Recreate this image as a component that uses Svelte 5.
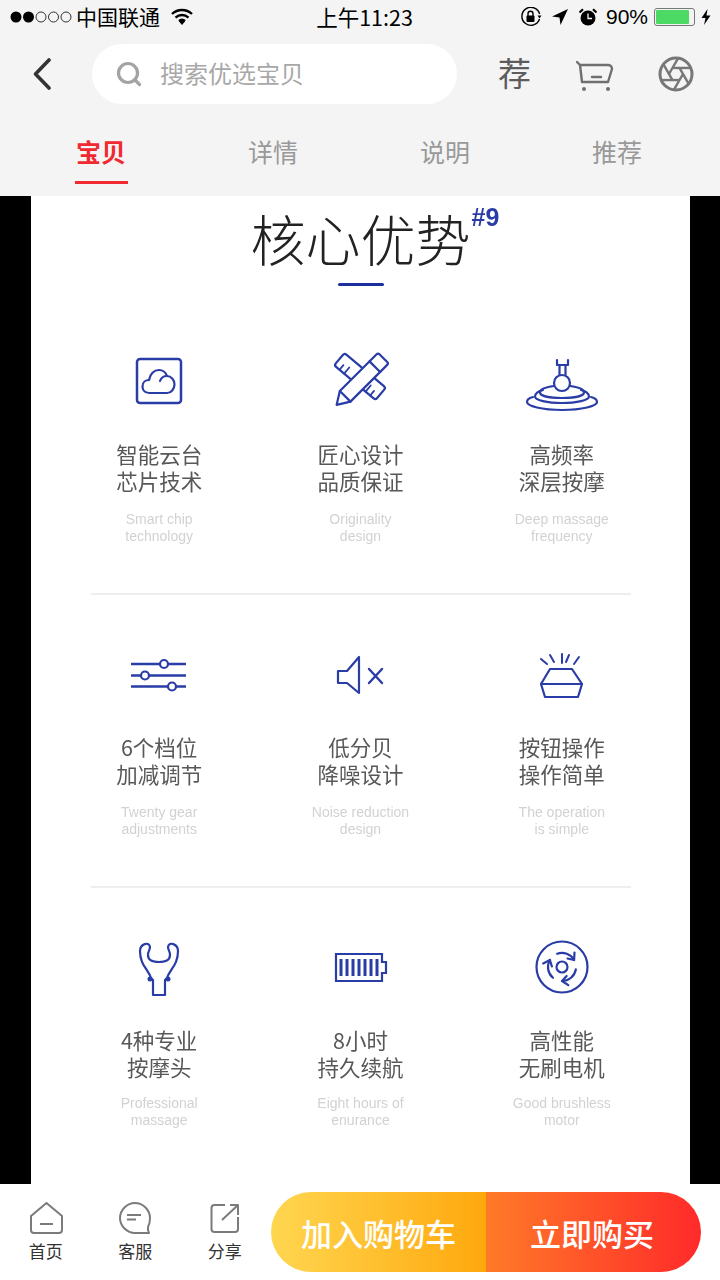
<script>
	const tabs = ['宝贝', '详情', '说明', '推荐'];

	const rows = [
		[
			{ icon: 'cloud', zh: ['智能云台', '芯片技术'], en: ['Smart chip', 'technology'] },
			{ icon: 'tools', zh: ['匠心设计', '品质保证'], en: ['Originality', 'design'] },
			{ icon: 'ripple', zh: ['高频率', '深层按摩'], en: ['Deep massage', 'frequency'] }
		],
		[
			{ icon: 'sliders', zh: ['6个档位', '加减调节'], en: ['Twenty gear', 'adjustments'] },
			{ icon: 'mute', zh: ['低分贝', '降噪设计'], en: ['Noise reduction', 'design'] },
			{ icon: 'button', zh: ['按钮操作', '操作简单'], en: ['The operation', 'is simple'] }
		],
		[
			{ icon: 'fork', zh: ['4种专业', '按摩头'], en: ['Professional', 'massage'] },
			{ icon: 'battery', zh: ['8小时', '持久续航'], en: ['Eight hours of', 'enurance'] },
			{ icon: 'motor', zh: ['高性能', '无刷电机'], en: ['Good brushless', 'motor'] }
		]
	];

	// aperture: inner hexagon edges run on until they hit the outer ring
	const inner = 7;
	const outer = 15.5;
	const blades = [0, 60, 120, 180, 240, 300].map((deg) => {
		const a = (deg * Math.PI) / 180;
		const b = ((deg + 60) * Math.PI) / 180;
		const x1 = inner * Math.cos(a);
		const y1 = inner * Math.sin(a);
		const x2 = inner * Math.cos(b);
		const y2 = inner * Math.sin(b);
		const dx = (x2 - x1) / inner;
		const dy = (y2 - y1) / inner;
		const p = x1 * dx + y1 * dy;
		const t = -p + Math.sqrt(p * p - inner * inner + outer * outer);
		return { x1: 18 + x1, y1: 18 + y1, x2: 18 + x1 + t * dx, y2: 18 + y1 + t * dy };
	});
</script>

<div class="page">
	<header class="top">
		<div class="status">
			<div class="status-left">
				<svg class="dots" width="62" height="14" viewBox="0 0 62 14">
					<circle cx="6" cy="7" r="5.5" fill="#000" />
					<circle cx="18.5" cy="7" r="5.5" fill="#000" />
					<circle cx="31" cy="7" r="5" fill="none" stroke="#333" />
					<circle cx="43.5" cy="7" r="5" fill="none" stroke="#333" />
					<circle cx="56" cy="7" r="5" fill="none" stroke="#333" />
				</svg>
				<span class="carrier">中国联通</span>
				<svg class="wifi" width="22" height="17" viewBox="0 0 22 17" fill="none" stroke="#000" stroke-width="2.4">
					<path d="M1 6a14.5 14.5 0 0 1 20 0" />
					<path d="M4.5 9.6a9.5 9.5 0 0 1 13 0" />
					<path d="M8 13a4.6 4.6 0 0 1 6 0" />
					<path d="M11 17l-3-3.6a4.6 4.6 0 0 1 6 0z" fill="#000" stroke="none" />
				</svg>
			</div>
			<div class="time">上午11:23</div>
			<div class="status-right">
				<svg width="21" height="20" viewBox="0 0 21 20" fill="none" stroke="#000" stroke-width="1.4">
					<path d="M18.5 12A9 9 0 1 1 18.6 7" />
					<path d="M16.5 8.5h4l-2 3z" fill="#000" stroke="none" />
					<rect x="5.5" y="8.5" width="8" height="6.5" rx="1" fill="#000" stroke="none" />
					<path d="M7 9V6.8a2.5 2.5 0 0 1 5 0V9" />
				</svg>
				<svg class="loc" width="16" height="16" viewBox="0 0 16 16"><path d="M16 0L0 7.5l7.5 1 1 7.5z" fill="#000" /></svg>
				<svg class="alarm" width="18" height="18" viewBox="0 0 18 18">
					<circle cx="9" cy="10" r="7.5" fill="#000" />
					<path d="M9 5.5V10.5H13" fill="none" stroke="#f4f4f4" stroke-width="1.3" />
					<path d="M0.5 4.5L4 1.2M17.5 4.5L14 1.2" stroke="#000" stroke-width="2.2" />
				</svg>
				<span class="pct">90%</span>
				<div class="batt"><div class="batt-fill"></div></div>
				<svg class="bolt" width="10" height="16" viewBox="0 0 10 16"><path d="M6.5 0L0.5 9H4.5L3 16 9.5 6.5H5.5z" fill="#000" /></svg>
			</div>
		</div>

		<nav class="nav">
			<svg class="back" width="18" height="32" viewBox="0 0 18 32" fill="none" stroke="#333" stroke-width="3.6" stroke-linecap="round" stroke-linejoin="round">
				<path d="M16 2L2.5 16 16 30" />
			</svg>
			<div class="search">
				<svg width="26" height="26" viewBox="0 0 26 26" fill="none" stroke="#a3a3a3" stroke-width="3.2">
					<circle cx="12" cy="12" r="9.5" />
					<path d="M19 19l4.5 4.5" stroke-linecap="round" />
				</svg>
				<span>搜索优选宝贝</span>
			</div>
			<span class="rec">荐</span>
			<svg class="cart" width="38" height="34" viewBox="0 0 38 34" fill="none" stroke="#6f6f6f" stroke-width="2.4" stroke-linecap="round" stroke-linejoin="round">
				<path d="M1 5L4 8 6 25H32L36 12C36 9 34 8 32 8H4" />
				<path d="M16 20H25" />
				<circle cx="8" cy="32" r="2" fill="#6f6f6f" stroke="none" />
				<circle cx="32" cy="32" r="2" fill="#6f6f6f" stroke="none" />
			</svg>
			<svg class="aperture" width="36" height="36" viewBox="0 0 36 36" fill="none" stroke="#777" stroke-width="2.4">
				<circle cx="18" cy="18" r="16" stroke-width="3" />
				{#each blades as b}
					<line x1={b.x1} y1={b.y1} x2={b.x2} y2={b.y2} />
				{/each}
			</svg>
		</nav>

		<div class="tabs">
			{#each tabs as tab, i}
				<div class="tab" class:active={i === 0}>{tab}</div>
			{/each}
		</div>
	</header>

	<main class="main">
		<section class="sheet">
			<div class="heading">
				<h1>核心优势<sup>#9</sup></h1>
				<div class="rule"></div>
			</div>

			{#each rows as row, r}
				<div class="row" class:last={r === 2}>
					{#each row as item}
						<div class="cell">
							<svg class="ico" width="80" height="64" viewBox="0 0 80 64" fill="none" stroke="#2a3ca6" stroke-width="2.2" stroke-linecap="round" stroke-linejoin="round">
								{#if item.icon === 'cloud'}
									<rect x="18" y="10" width="44" height="44" rx="3" stroke-width="2.5" />
									<path d="M30 44C25 44 23.5 40 23.5 37.5 23.5 33 27 31 30 31 31 25 35 21 40 21 44 21 47 24 48 27 52 27 55.5 31 55.5 35.5 55.5 40 52 44 48 44Z" />
									<path d="M48 27C45 27 42 29 41 32" />
								{:else if item.icon === 'tools'}
									<g transform="translate(40 27.5) rotate(40)">
										<rect x="-27" y="-8" width="54" height="16" rx="2.5" />
										<path d="M-20 8v-6M-14 8v-8M14 8v-8M20 8v-6" stroke-width="1.8" />
									</g>
									<g transform="translate(40 32.5) rotate(-45)">
										<path d="M-33 0L-21-7.5H31Q33-7.5 33-5.5V5.5Q33 7.5 31 7.5H-21Z" fill="#fff" />
										<path d="M-21-7.5V7.5M21-7.5V7.5" />
									</g>
								{:else if item.icon === 'ripple'}
									<path d="M35 11V16H46V11M37.5 16V26M43.5 16V26" />
									<circle cx="40" cy="34" r="8" />
									<path d="M32 37C24 38 18 40 18 43.5 18 47 28 49 40 49S62 47 62 43.5C62 40 56 38 48 37" />
									<path d="M21 41C16 42 13 45 13 47.5 13 51 25 54 40 54S67 51 67 47.5C67 45 64 42 59 41" />
									<path d="M11 48C7 49 5 51 5 53 5 57 20 61 40 61S75 57 75 53C75 51 73 49 69 48" />
								{:else if item.icon === 'sliders'}
									<path d="M12 22H67M12 33.5H67M12 44.5H67" stroke-width="2.6" stroke-linecap="butt" />
									<circle cx="45" cy="22" r="4" fill="#fff" />
									<circle cx="26" cy="33.5" r="4" fill="#fff" />
									<circle cx="53" cy="44.5" r="4" fill="#fff" />
								{:else if item.icon === 'mute'}
									<path d="M18 29H27L39 15V51L27 41H18Z" />
									<path d="M49 27L62 41M62 27L49 41" stroke-width="2.4" />
								{:else if item.icon === 'button'}
									<path d="M28 27H50L60 42 56 55H23L19 42Z" />
									<path d="M19 42H60" />
									<path d="M19 17L25 22M28 13L32 20M40 12V21M47 13L44 20M57 15L52 22" stroke-width="2" />
								{:else if item.icon === 'fork'}
									<path d="M34 60V45L32 43C29 34 21 30 21 16 21 9 30 6 31 12 31 15 29 16 29 20 29 25 34 27 40 27 46 27 51 25 51 20 51 16 49 15 49 12 50 6 59 9 59 16 59 30 51 34 48 43L46 45V60Z" />
									<circle cx="31" cy="44" r="1.4" fill="#2a3ca6" />
									<circle cx="49" cy="44" r="1.4" fill="#2a3ca6" />
								{:else if item.icon === 'battery'}
									<path d="M16 19H62V27H66V38H62V46H16Z" stroke-linecap="butt" stroke-linejoin="miter" />
									<path d="M21 24V41M27 24V41M33 24V41M39 24V41M45 24V41M51 24V41M57 24V41" stroke-width="3" stroke-linecap="butt" />
								{:else if item.icon === 'motor'}
									<circle cx="40" cy="32" r="25.5" />
									<circle cx="40" cy="32" r="5.5" />
									{#each [0, 120, 240] as deg}
										<g transform="translate(40 32) rotate({deg})">
											<path d="M-4.8-13.2A14 14 0 0 1 12.1-7" />
											<path d="M12.5-14.5L12.1-7 5.5-8.5" />
										</g>
									{/each}
								{/if}
							</svg>
							<div class="zh">{item.zh[0]}<br />{item.zh[1]}</div>
							<div class="en">{item.en[0]}<br />{item.en[1]}</div>
						</div>
					{/each}
				</div>
				{#if r < 2}
					<div class="divider"></div>
				{/if}
			{/each}
		</section>
	</main>

	<footer class="bottom">
		<div class="links">
			<div class="link">
				<svg width="34" height="34" viewBox="0 0 34 34" fill="none" stroke="#7b7b7b" stroke-width="2" stroke-linejoin="round">
					<path d="M17.5 2L33 15V29Q33 32 30 32H5Q2 32 2 29V15Z" />
					<path d="M11 23H24" />
				</svg>
				<span>首页</span>
			</div>
			<div class="link">
				<svg width="34" height="34" viewBox="0 0 34 34" fill="none" stroke="#7b7b7b" stroke-width="2" stroke-linejoin="round">
					<path d="M17 2C9 2 2 9 2 17S9 32 17 32H31C30 30 29.5 29 30 26 31 24 32 21 32 17 32 9 25 2 17 2Z" />
					<path d="M9 14H23M9 18.5H18" />
				</svg>
				<span>客服</span>
			</div>
			<div class="link">
				<svg width="34" height="34" viewBox="0 0 34 34" fill="none" stroke="#7b7b7b" stroke-width="2" stroke-linejoin="round">
					<path d="M17 4H6.5Q3.5 4 3.5 7V28Q3.5 31 6.5 31H27Q30 31 30 28V16" />
					<path d="M14 19L30 4M22 4H30V14" />
				</svg>
				<span>分享</span>
			</div>
		</div>
		<div class="actions">
			<div class="btn cart-btn">加入购物车</div>
			<div class="btn buy-btn">立即购买</div>
		</div>
	</footer>
</div>

<style>
	:global(body) {
		margin: 0;
		background: #fff;
	}

	.page {
		width: 720px;
		height: 1280px;
		display: flex;
		flex-direction: column;
		overflow: hidden;
		font-family: 'Noto Sans CJK SC', 'Liberation Sans', sans-serif;
	}

	/* top area */
	.top {
		height: 196px;
		flex: none;
		background: #f4f4f4;
	}

	.status {
		height: 33px;
		padding: 0 9px 0 10px;
		display: grid;
		grid-template-columns: 1fr auto 1fr;
		align-items: center;
		color: #000;
		font-size: 21px;
	}

	.status-left,
	.status-right {
		display: flex;
		align-items: center;
	}

	.status-right {
		justify-content: flex-end;
	}

	.carrier {
		margin-left: 4px;
		line-height: 1;
	}

	.wifi {
		margin-left: 11px;
	}

	.time {
		font-size: 21.5px;
		line-height: 1;
		padding-left: 8px;
	}

	.loc {
		margin-left: 10px;
	}

	.alarm {
		margin-left: 11px;
	}

	.pct {
		margin-left: 9px;
		font-family: 'Liberation Sans', sans-serif;
		font-size: 21px;
	}

	.batt {
		margin-left: 6px;
		width: 41px;
		height: 18px;
		box-sizing: border-box;
		border: 1px solid #777;
		border-radius: 3px;
		padding: 1px;
	}

	.batt-fill {
		width: 90%;
		height: 100%;
		background: #4cd964;
		border-radius: 1px;
	}

	.bolt {
		margin-left: 6px;
	}

	.nav {
		height: 60px;
		margin-top: 11px;
		display: flex;
		align-items: center;
		padding-left: 33px;
	}

	.search {
		margin-left: 41px;
		width: 365px;
		height: 60px;
		box-sizing: border-box;
		background: #fff;
		border-radius: 30px;
		padding-left: 24px;
		display: flex;
		align-items: center;
		gap: 18px;
		color: #a8a8a8;
		font-size: 24px;
	}

	.search span {
		position: relative;
		top: -2px;
	}

	.rec {
		margin-left: 41px;
		font-size: 33px;
		line-height: 1;
		color: #5c5c5c;
		position: relative;
		top: -2px;
	}

	.cart {
		margin-left: 45px;
	}

	.aperture {
		margin-left: 44px;
	}

	.tabs {
		margin: 20px 0 0 15px;
		display: flex;
	}

	.tab {
		width: 172px;
		height: 60px;
		position: relative;
		text-align: center;
		font-size: 25px;
		line-height: 54px;
		color: #999;
	}

	.tab.active {
		color: #f02a30;
		font-weight: 700;
	}

	.tab.active::after {
		content: '';
		position: absolute;
		left: 60px;
		bottom: 0;
		width: 53px;
		height: 3px;
		background: #f02a30;
	}

	/* product image */
	.main {
		flex: 1;
		min-height: 0;
		background: #000;
		padding: 0 30px 0 31px;
	}

	.sheet {
		height: 100%;
		background: #fff;
		overflow: hidden;
		filter: blur(0.35px);
	}

	.heading {
		display: flex;
		flex-direction: column;
		align-items: center;
		height: 153px;
	}

	h1 {
		margin: 7px 0 0;
		position: relative;
		font-size: 55px;
		font-weight: 300;
		line-height: 68px;
		color: #222;
	}

	sup {
		position: absolute;
		left: 221px;
		top: 2px;
		font-size: 25px;
		line-height: 24px;
		font-weight: 700;
		color: #2a3ca6;
		font-family: 'Liberation Sans', sans-serif;
	}

	.rule {
		margin-top: 12px;
		width: 46px;
		height: 3px;
		border-radius: 2px;
		background: #1c2f9f;
	}

	.row {
		width: 604px;
		height: 244px;
		margin: 0 auto;
		display: grid;
		grid-template-columns: repeat(3, 1fr);
	}

	.divider {
		width: 540px;
		height: 2px;
		margin: 0 auto 47px;
		background: #eceef0;
	}

	.cell {
		display: flex;
		flex-direction: column;
		align-items: center;
		text-align: center;
	}

	.ico {
		display: block;
	}

	.zh {
		margin-top: 27px;
		font-size: 21.5px;
		line-height: 27px;
		color: #585858;
	}

	.en {
		margin-top: 17px;
		font-family: 'Liberation Sans', sans-serif;
		font-size: 14px;
		line-height: 16.5px;
		color: #d2d2d2;
	}

	.row.last .en {
		margin-top: 15px;
	}

	/* bottom bar */
	.bottom {
		height: 96px;
		flex: none;
		background: #fff;
		display: flex;
		align-items: center;
		padding: 0 19px 0 1px;
	}

	.links {
		display: flex;
		width: 270px;
	}

	.link {
		width: 89.5px;
		display: flex;
		flex-direction: column;
		align-items: center;
		gap: 4px;
		font-size: 17px;
		line-height: 24px;
		color: #333;
	}

	.link svg {
		display: block;
	}

	.actions {
		display: flex;
		width: 430px;
		height: 80px;
		border-radius: 40px;
		overflow: hidden;
		color: #fff;
		font-size: 31px;
		font-weight: 500;
	}

	.btn {
		display: flex;
		align-items: center;
		justify-content: center;
		box-sizing: border-box;
	}

	.cart-btn {
		width: 215px;
		background: linear-gradient(90deg, #ffd650, #ffa80d);
	}

	.buy-btn {
		width: 215px;
		padding-right: 3px;
		background: linear-gradient(90deg, #ff7a28, #ff2a2a);
	}
</style>
